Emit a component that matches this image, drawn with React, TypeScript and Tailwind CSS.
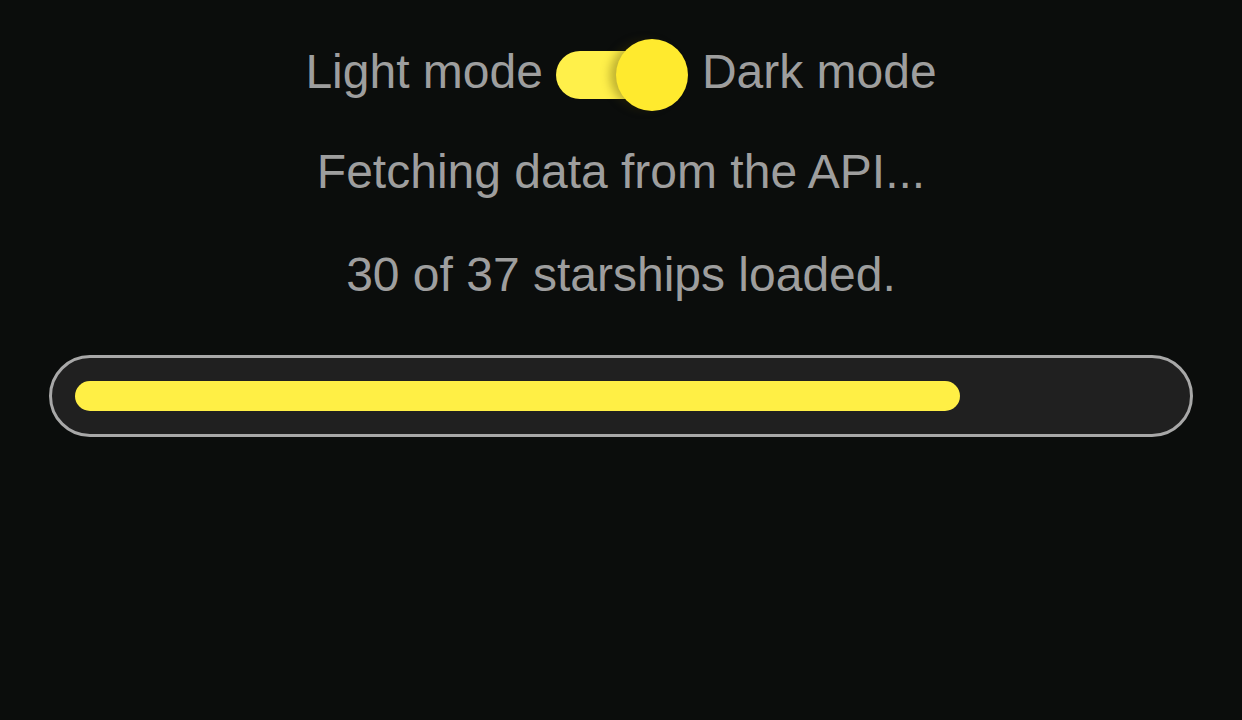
import React from 'react';

const LOADED = 30;
const TOTAL = 37;

const Toggle = () => (
  <div className="relative w-[132px] h-[72px] flex items-center">
    <div className="w-[112px] h-[48px] rounded-full bg-[#fff04a]" />
    <div className="absolute left-[60px] top-0 w-[72px] h-[72px] rounded-full bg-[#ffea2e] shadow-[-8px_0_10px_-2px_rgba(70,60,0,0.35)]" />
  </div>
);

export default function App() {
  const pct = (LOADED / TOTAL) * 100;

  return (
    <div className="w-full min-h-[720px] bg-[#0b0d0c] text-[#9e9e9e] font-['Liberation_Sans',Arial,sans-serif] text-[48px] leading-none flex flex-col items-center pt-[39px]">
      {/* Theme switch */}
      <div className="flex items-start">
        <span className="mt-[9px] mr-[13px]">Light mode</span>
        <Toggle />
        <span className="mt-[9px] ml-[14px]">Dark mode</span>
      </div>

      <p className="mt-[37px]">Fetching data from the API...</p>
      <p className="mt-[55px]">{LOADED} of {TOTAL} starships loaded.</p>

      {/* Progress */}
      <div className="w-full px-[49px] mt-[56px]">
        <div className="h-[82px] rounded-full border-[3px] border-[#a8a8a8] bg-[#202020] p-[23px]">
          <div className="h-[30px] rounded-full bg-[#ffef45]" style={{ width: `${pct}%` }} />
        </div>
      </div>
    </div>
  );
}
